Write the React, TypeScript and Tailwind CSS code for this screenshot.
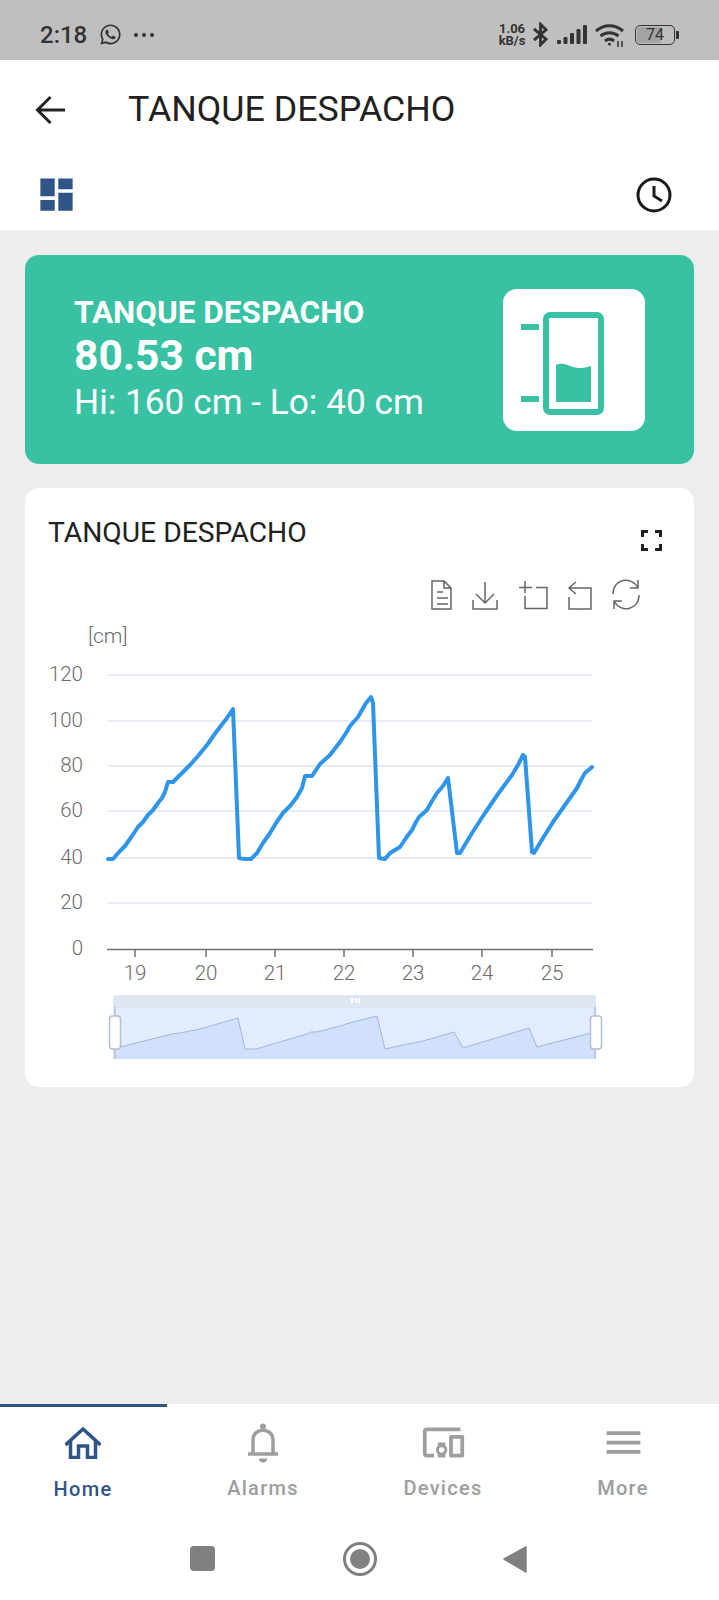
import { FaWhatsapp } from "react-icons/fa"
import { MdDashboard, MdDevicesOther, MdMenu } from "react-icons/md"

const linePoints =
  "108,859 113,859 119,852 125,846 132,836 138,827 143,822 148,815 153,810 158,803 162,798 165,792 168,782 173,782 177,778 182,773 190,765 198,756 207,745 214,735 220,727 227,718 233,709 239,858 245,859 251,859 257,853 263,843 270,833 276,823 283,813 290,806 297,797 302,788 305,776 312,776 316,770 320,764 330,755 340,742 346,733 350,726 358,717 366,703 371,697 373,703 379,858 385,859 390,853 395,850 400,847 406,838 412,830 416,822 419,817 427,810 432,801 437,793 443,786 448,778 457,853 460,853 472,833 485,813 498,794 512,775 518,765 523,755 525,757 532,852 534,853 543,838 553,822 565,805 577,788 581,780 585,773 592,767"

const miniPoints =
  "116,1048 172,1034 180,1033 200,1029 238,1018 245,1049 256,1049 307,1034 311,1032 317,1032 340,1026 353,1022 377,1016 385,1049 403,1045 423,1041 454,1032 463,1048 529,1028 537,1047 595,1032"

const yTicks = [
  { label: "120", y: 675 },
  { label: "100", y: 721 },
  { label: "80", y: 766 },
  { label: "60", y: 811 },
  { label: "40", y: 858 },
  { label: "20", y: 903 },
]

const xTicks = [
  { label: "19", x: 135 },
  { label: "20", x: 206 },
  { label: "21", x: 275 },
  { label: "22", x: 344 },
  { label: "23", x: 413 },
  { label: "24", x: 482 },
  { label: "25", x: 552 },
]

function StatusBar() {
  return (
    <div className="flex h-[60px] shrink-0 items-center bg-[#bfbfbf] pl-[40px] pt-[9px] text-[#333333]">
      <span className="w-[59px] text-[24px] font-medium leading-none">2:18</span>
      <FaWhatsapp className="text-[23px]" />
      <span className="ml-[12px] flex gap-[4px]">
        <i className="size-[4px] rounded-full bg-[#333333]" />
        <i className="size-[4px] rounded-full bg-[#333333]" />
        <i className="size-[4px] rounded-full bg-[#333333]" />
      </span>
      <div className="ml-auto flex items-center pr-[40px]">
        <div className="flex w-[28px] flex-col items-center text-[13px] font-bold leading-[12px]">
          <span>1.06</span>
          <span>kB/s</span>
        </div>
        <svg viewBox="0 0 16 26" className="ml-[7px] h-[25px] w-[15px]" fill="none" stroke="#333333" strokeWidth="3">
          <path d="M1 7 14 18 8 24V2l6 6L1 19" />
        </svg>
        <svg viewBox="0 0 30 20" className="ml-[9px] h-[20px] w-[30px]" fill="#333333">
          <rect x="0" y="15" width="4" height="4" rx="1" />
          <rect x="6.500" y="12" width="4" height="7" rx="1" />
          <rect x="13" y="8" width="4" height="11" rx="1" />
          <rect x="19.500" y="4" width="4" height="15" rx="1" />
          <rect x="26" y="0" width="4" height="19" rx="1" />
        </svg>
        <svg viewBox="0 0 30 24" className="ml-[8px] h-[24px] w-[30px]" fill="none" stroke="#333333" strokeWidth="3">
          <path d="M1 8c8-7 19-7 27 0" />
          <path d="M5.500 13c5.500-4.500 12.500-4.500 18 0" />
          <path d="M10 18c3-2.500 6-2.500 9 0" />
          <circle cx="14.500" cy="21" r="1.500" fill="#333333" stroke="none" />
          <path d="M23 18v6M27 18v6" strokeWidth="1.500" />
        </svg>
        <div className="relative ml-[10px] flex h-[20px] w-[40px] items-center justify-center overflow-hidden rounded-[5px] border-[1.500px] border-[#333333] text-[16px] font-normal leading-none">
          <div className="absolute inset-y-[1px] left-[1px] w-[24px] rounded-[2px] bg-[#a3a3a3]" />
          <span className="relative">74</span>
        </div>
        <div className="ml-[1px] h-[8px] w-[3px] rounded-r-[1px] bg-[#333333]" />
      </div>
    </div>
  )
}

function Header() {
  return (
    <div className="h-[170px] shrink-0 bg-white">
      <div className="flex h-[100px] items-center pl-[35px]">
        <svg viewBox="0 0 30 30" className="size-[30px]" fill="none" stroke="#222222" strokeWidth="3">
          <path d="M30 15H3M15.500 2 2.500 15l13 13" />
        </svg>
        <h1 className="ml-[63px] text-[35.750px] font-normal leading-none text-[#212121]">TANQUE DESPACHO</h1>
      </div>
      <div className="flex items-start justify-between pl-[35px] pr-[47px]">
        <MdDashboard className="mt-[13px] size-[43px] text-[#2f5587]" />
        <svg viewBox="0 0 36 36" className="mt-[17px] size-[36px]" fill="none" stroke="#1a1a1a" strokeWidth="3">
          <circle cx="18" cy="18" r="16" />
          <path d="M18 9v10l8 5" />
        </svg>
      </div>
    </div>
  )
}

function TankIcon() {
  return (
    <div className="flex size-[142px] items-center justify-center rounded-[14px] bg-white">
      <svg viewBox="503 288 142 142" className="size-[142px]" fill="#38c2a3">
        <rect x="521" y="323" width="18" height="6" />
        <rect x="521" y="395" width="18" height="6" />
        <rect x="546" y="314" width="55" height="97" rx="4" fill="none" stroke="#38c2a3" strokeWidth="6" />
        <path d="M556 364c6-3 11 0 17 2 6 2 12 1 18-1v36h-35z" />
      </svg>
    </div>
  )
}

function ChartToolbar() {
  return (
    <g fill="none" stroke="#666666" strokeWidth="1.500">
      <path d="M432 581h12l7 7v21h-19zM444 581v7h7M437 592h6M437 598h11M437 604h11" />
      <path d="M485 582v21M476 594l9 9 9-9M473 600v9h24v-9" />
      <path d="M519 587.500h13M525 581v12M525 596v12.500h22v-21h-11" />
      <path d="M569 588h22v21h-22v-12M576 582l-7 6 7 6" />
      <path d="M613 594c0-15 18-19 25-6M639 595c0 15-18 19-25 6M638 580v8h-8M614 609v-8h8" />
    </g>
  )
}

function LevelChart() {
  return (
    <svg viewBox="25 570 669 517" className="block h-[517px] w-[669px]" fontFamily="Roboto, sans-serif">
      <ChartToolbar />
      <text x="88" y="643" fontSize="21" fontWeight="300" fill="#6b6b70">[cm]</text>
      {yTicks.map((t) => (
        <g key={t.label}>
          <line x1="108" x2="592" y1={t.y} y2={t.y} stroke="#e0e6f1" strokeWidth="1.500" />
          <text x="83" y={t.y + 6} textAnchor="end" fontSize="20.500" fontWeight="300" fill="#6b6b70">{t.label}</text>
        </g>
      ))}
      <text x="83" y="955" textAnchor="end" fontSize="20.500" fontWeight="300" fill="#6b6b70">0</text>
      <line x1="107" x2="593" y1="949.500" y2="949.500" stroke="#6e7079" strokeWidth="1.500" />
      {xTicks.map((t) => (
        <g key={t.label}>
          <line x1={t.x} x2={t.x} y1="949" y2="957" stroke="#6e7079" strokeWidth="1.500" />
          <text x={t.x} y="980" textAnchor="middle" fontSize="20.500" fontWeight="300" fill="#6b6b70">{t.label}</text>
        </g>
      ))}
      <polyline points={linePoints} fill="none" stroke="#2f95e8" strokeWidth="4" strokeLinejoin="round" strokeLinecap="round" />

      {/* data zoom */}
      <path d="M113 998a3 3 0 0 1 3-3h477a3 3 0 0 1 3 3v10H113z" fill="#dfe6f3" />
      <rect x="113" y="1008" width="483" height="51" fill="#e2ecfd" />
      <polygon points={`116,1059 ${miniPoints} 595,1059`} fill="#d1e0fb" />
      <polyline points={miniPoints} fill="none" stroke="#9fb6e0" strokeWidth="1" />
      <line x1="115" x2="115" y1="1007" y2="1059" stroke="#b4bfd4" strokeWidth="1.500" />
      <line x1="595" x2="595" y1="1007" y2="1059" stroke="#b4bfd4" strokeWidth="1.500" />
      <path d="M352 998v5M355.500 998v5M359 998v5" stroke="#ffffff" strokeWidth="2" />
      <rect x="109.500" y="1016" width="11" height="33" rx="3" fill="#ffffff" stroke="#b4bfd4" strokeWidth="1.500" />
      <rect x="590.500" y="1016" width="11" height="33" rx="3" fill="#ffffff" stroke="#b4bfd4" strokeWidth="1.500" />
    </svg>
  )
}

function Cards() {
  return (
    <main className="flex min-h-0 flex-1 flex-col gap-[24px] bg-[#ededed] px-[25px] pt-[25px]">
      <section className="flex h-[209px] items-center justify-between rounded-[14px] bg-[#38c2a3] pl-[49px] pr-[49px] text-white">
        <div className="mb-[2px]">
          <div className="text-[31.500px] font-bold leading-[36px]">TANQUE DESPACHO</div>
          <div className="text-[42.500px] font-bold leading-[50px]">80.53 cm</div>
          <div className="text-[35.250px] leading-[42px]">Hi: 160 cm - Lo: 40 cm</div>
        </div>
        <TankIcon />
      </section>
      <section className="rounded-[14px] bg-white">
        <div className="flex h-[82px] items-start justify-between pl-[23px] pr-[32px] pt-[29px]">
          <h2 className="text-[28.250px] font-normal leading-[32px] text-[#212121]">TANQUE DESPACHO</h2>
          <svg viewBox="0 0 21 21" className="mt-[13px] size-[21px]" fill="none" stroke="#222222" strokeWidth="3">
            <path d="M1.500 7V1.500H7M14 1.500h5.500V7M19.500 14v5.500H14M7 19.500H1.500V14" />
          </svg>
        </div>
        <LevelChart />
      </section>
    </main>
  )
}

function BottomNav() {
  return (
    <nav className="h-[196px] shrink-0 bg-white">
      <div className="h-[3px] w-[167px] bg-[#2f5587]" />
      <div className="ml-[-7px] grid h-[127px] w-[720px] grid-cols-4 pt-[16px] text-center text-[20px] font-medium leading-[24px] tracking-[1.300px] text-[#9e9e9e]">
        <div className="flex flex-col items-center text-[#2f5587]">
          <svg viewBox="0 0 36 32" className="mt-[4px] h-[32px] w-[36px]" fill="none" stroke="#2f5587" strokeWidth="3.500">
            <path d="M.5 18 18 2l17.500 16" />
            <path d="M5.500 14v16.500h8V19h9v11.500h8V14" />
          </svg>
          <span className="mt-[18px]">Home</span>
        </div>
        <div className="flex flex-col items-center">
          <svg viewBox="0 0 32 40" className="h-[40px] w-[32px]" fill="none" stroke="#9e9e9e" strokeWidth="3.500">
            <circle cx="16" cy="3.500" r="3" fill="#9e9e9e" stroke="none" />
            <path d="M6 30V17c0-13 20-13 20 0v13" />
            <path d="M1 31h30" />
            <path d="M12 35.500h8a4 4 0 0 1-8 0z" fill="#9e9e9e" stroke="none" />
          </svg>
          <span className="mt-[13px]">Alarms</span>
        </div>
        <div className="flex flex-col items-center">
          <MdDevicesOther className="mt-[-3.500px] size-[45px] text-[#9e9e9e]" />
          <span className="mt-[11.500px]">Devices</span>
        </div>
        <div className="flex flex-col items-center">
          <MdMenu className="mt-[-3.500px] size-[45px] text-[#9e9e9e]" />
          <span className="mt-[11.500px]">More</span>
        </div>
      </div>
      <div className="flex h-[66px] items-start pl-[190px] pt-[12px]">
        <div className="size-[25px] rounded-[4px] bg-[#808080]" />
        <svg viewBox="0 0 36 36" className="ml-[127px] mt-[-5px] size-[36px]">
          <circle cx="18" cy="18" r="15.500" fill="none" stroke="#808080" strokeWidth="3" />
          <circle cx="18" cy="18" r="10" fill="#808080" />
        </svg>
        <svg viewBox="0 0 24 28" className="ml-[125px] mt-[-1px] h-[28px] w-[24px]">
          <path d="M23 2 1 14l22 13z" fill="#808080" stroke="#808080" strokeWidth="1.500" strokeLinejoin="round" />
        </svg>
      </div>
    </nav>
  )
}

export default function App() {
  return (
    <div className="flex h-[1600px] w-[719px] flex-col overflow-hidden bg-[#ededed] [font-family:Roboto,sans-serif]">
      <StatusBar />
      <Header />
      <Cards />
      <BottomNav />
    </div>
  )
}
